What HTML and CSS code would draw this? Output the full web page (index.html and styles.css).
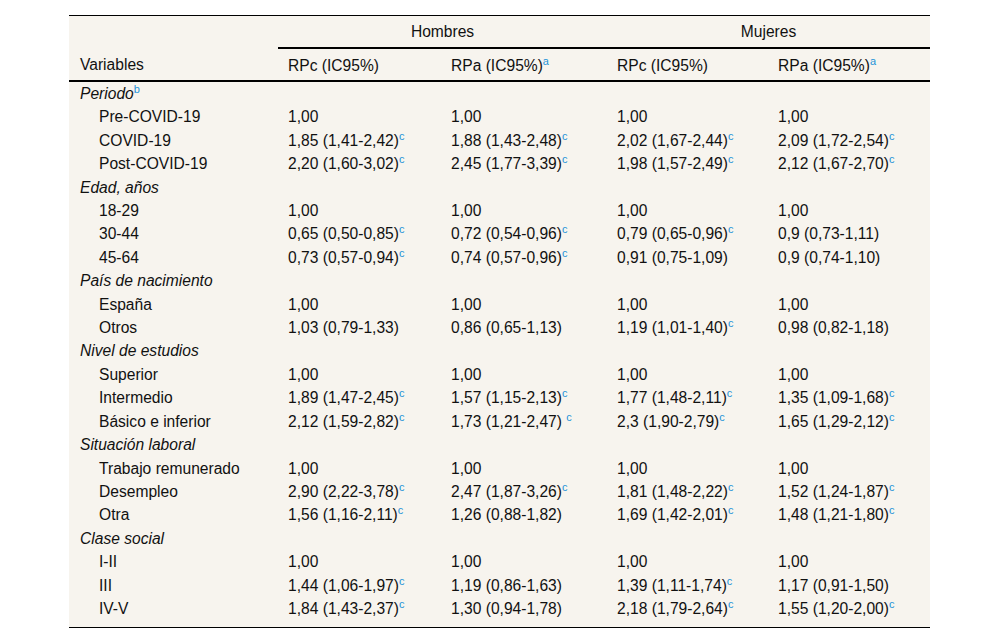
FILE: index.html
```html
<!DOCTYPE html>
<html lang="es">
<head>
<meta charset="utf-8">
<title>Tabla</title>
<link rel="stylesheet" href="styles.css">
</head>
<body>
<div class="page">
<table class="data">
  <colgroup>
    <col class="c-var"><col class="c1"><col class="c2"><col class="c3"><col class="c4">
  </colgroup>
  <thead>
    <tr class="group">
      <th class="blank"></th>
      <th colspan="2" class="grp">Hombres</th>
      <th colspan="2" class="grp">Mujeres</th>
    </tr>
    <tr class="heads">
      <th class="first">Variables</th>
      <th>RPc (IC95%)</th>
      <th>RPa (IC95%)<sup>a</sup></th>
      <th>RPc (IC95%)</th>
      <th>RPa (IC95%)<sup>a</sup></th>
    </tr>
  </thead>
  <tbody>
    <tr class="cat"><td class="first"><em>Periodo</em><sup>b</sup></td><td></td><td></td><td></td><td></td></tr>
    <tr><td class="sub">Pre-COVID-19</td><td>1,00</td><td>1,00</td><td>1,00</td><td>1,00</td></tr>
    <tr><td class="sub">COVID-19</td><td>1,85 (1,41-2,42)<sup>c</sup></td><td>1,88 (1,43-2,48)<sup>c</sup></td><td>2,02 (1,67-2,44)<sup>c</sup></td><td>2,09 (1,72-2,54)<sup>c</sup></td></tr>
    <tr><td class="sub">Post-COVID-19</td><td>2,20 (1,60-3,02)<sup>c</sup></td><td>2,45 (1,77-3,39)<sup>c</sup></td><td>1,98 (1,57-2,49)<sup>c</sup></td><td>2,12 (1,67-2,70)<sup>c</sup></td></tr>
    <tr class="cat"><td class="first"><em>Edad, años</em></td><td></td><td></td><td></td><td></td></tr>
    <tr><td class="sub">18-29</td><td>1,00</td><td>1,00</td><td>1,00</td><td>1,00</td></tr>
    <tr><td class="sub">30-44</td><td>0,65 (0,50-0,85)<sup>c</sup></td><td>0,72 (0,54-0,96)<sup>c</sup></td><td>0,79 (0,65-0,96)<sup>c</sup></td><td>0,9 (0,73-1,11)</td></tr>
    <tr><td class="sub">45-64</td><td>0,73 (0,57-0,94)<sup>c</sup></td><td>0,74 (0,57-0,96)<sup>c</sup></td><td>0,91 (0,75-1,09)</td><td>0,9 (0,74-1,10)</td></tr>
    <tr class="cat"><td class="first"><em>País de nacimiento</em></td><td></td><td></td><td></td><td></td></tr>
    <tr><td class="sub">España</td><td>1,00</td><td>1,00</td><td>1,00</td><td>1,00</td></tr>
    <tr><td class="sub">Otros</td><td>1,03 (0,79-1,33)</td><td>0,86 (0,65-1,13)</td><td>1,19 (1,01-1,40)<sup>c</sup></td><td>0,98 (0,82-1,18)</td></tr>
    <tr class="cat"><td class="first"><em>Nivel de estudios</em></td><td></td><td></td><td></td><td></td></tr>
    <tr><td class="sub">Superior</td><td>1,00</td><td>1,00</td><td>1,00</td><td>1,00</td></tr>
    <tr><td class="sub">Intermedio</td><td>1,89 (1,47-2,45)<sup>c</sup></td><td>1,57 (1,15-2,13)<sup>c</sup></td><td>1,77 (1,48-2,11)<sup>c</sup></td><td>1,35 (1,09-1,68)<sup>c</sup></td></tr>
    <tr><td class="sub">Básico e inferior</td><td>2,12 (1,59-2,82)<sup>c</sup></td><td>1,73 (1,21-2,47) <sup>c</sup></td><td>2,3 (1,90-2,79)<sup>c</sup></td><td>1,65 (1,29-2,12)<sup>c</sup></td></tr>
    <tr class="cat"><td class="first"><em>Situación laboral</em></td><td></td><td></td><td></td><td></td></tr>
    <tr><td class="sub">Trabajo remunerado</td><td>1,00</td><td>1,00</td><td>1,00</td><td>1,00</td></tr>
    <tr><td class="sub">Desempleo</td><td>2,90 (2,22-3,78)<sup>c</sup></td><td>2,47 (1,87-3,26)<sup>c</sup></td><td>1,81 (1,48-2,22)<sup>c</sup></td><td>1,52 (1,24-1,87)<sup>c</sup></td></tr>
    <tr><td class="sub">Otra</td><td>1,56 (1,16-2,11)<sup>c</sup></td><td>1,26 (0,88-1,82)</td><td>1,69 (1,42-2,01)<sup>c</sup></td><td>1,48 (1,21-1,80)<sup>c</sup></td></tr>
    <tr class="cat"><td class="first"><em>Clase social</em></td><td></td><td></td><td></td><td></td></tr>
    <tr><td class="sub">I-II</td><td>1,00</td><td>1,00</td><td>1,00</td><td>1,00</td></tr>
    <tr><td class="sub">III</td><td>1,44 (1,06-1,97)<sup>c</sup></td><td>1,19 (0,86-1,63)</td><td>1,39 (1,11-1,74)<sup>c</sup></td><td>1,17 (0,91-1,50)</td></tr>
    <tr class="last"><td class="sub">IV-V</td><td>1,84 (1,43-2,37)<sup>c</sup></td><td>1,30 (0,94-1,78)</td><td>2,18 (1,79-2,64)<sup>c</sup></td><td>1,55 (1,20-2,00)<sup>c</sup></td></tr>
  </tbody>
</table>
</div>
</body>
</html>
```

FILE: styles.css
```css
html, body {
  margin: 0;
  padding: 0;
  background: #ffffff;
}

.page {
  padding: 15px 0 0 69px;
  font-family: "Liberation Sans", Arial, sans-serif;
  font-size: 15.6px;
  color: #111111;
}

.data {
  width: 861px;
  table-layout: fixed;
  border-collapse: collapse;
  background: #f7f4ee;
  border-top: 1px solid #000;
  border-bottom: 1px solid #000;
}

.c-var { width: 209px; }
.c1 { width: 163px; }
.c2 { width: 166px; }
.c3 { width: 161px; }
.c4 { width: 162px; }

.data th {
  font-weight: normal;
  text-align: left;
  padding: 0 10px;
  white-space: nowrap;
}

.group th {
  height: 31px;
  vertical-align: middle;
}

.group th.grp {
  text-align: center;
  border-bottom: 2px solid #000;
}

.heads th {
  height: 29px;
  padding-top: 2px;
  border-bottom: 2px solid #000;
  vertical-align: middle;
}

.data td {
  padding: 3px 10px;
  line-height: 17.4px;
  white-space: nowrap;
  vertical-align: middle;
}

.data .first {
  padding-left: 11px;
}

.data td.sub {
  padding-left: 30px;
}

.data tr.last td {
  padding-bottom: 10px;
}

sup {
  font-size: 11px;
  line-height: 0;
  vertical-align: 0.55em;
  color: #1e93d8;
}
```
